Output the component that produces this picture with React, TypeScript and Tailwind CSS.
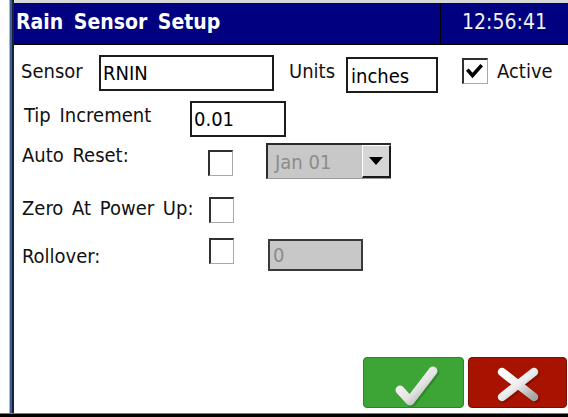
import type { ReactNode } from 'react';

// Sunken 3D checkbox used on the setup form
function CheckBox({ checked = false, className = '' }: { checked?: boolean; className?: string }) {
  return (
    <div
      className={`shrink-0 w-[25px] h-[26px] bg-white border-t-2 border-l-2 border-b border-r border-t-[#303030] border-l-[#303030] border-b-[#a8a8a8] border-r-[#a8a8a8] ${className}`}
    >
      {checked && (
        <svg width="22" height="23" viewBox="0 0 22 23" className="block">
          <path d="M4.5 11 L8.5 15.5 L16.5 6.5" fill="none" stroke="#000" strokeWidth="3.6" strokeLinecap="square" />
        </svg>
      )}
    </div>
  );
}

function TextBox({ children, className = '' }: { children: ReactNode; className?: string }) {
  return (
    <div className={`shrink-0 flex items-center border-2 border-[#1c1c1c] bg-white text-black ${className}`}>
      {children}
    </div>
  );
}

function Label({ children, className = '' }: { children: ReactNode; className?: string }) {
  return <div className={`shrink-0 whitespace-nowrap leading-[24px] [word-spacing:3px] ${className}`}>{children}</div>;
}

// Glossy check / cross glyphs on the OK and Cancel buttons
function OkGlyph() {
  return (
    <svg width="101" height="51" viewBox="0 0 101 51" className="block">
      <defs>
        <linearGradient id="okShine" x1="0" y1="0" x2="1" y2="1">
          <stop offset="0" stopColor="#ffffff" />
          <stop offset="0.55" stopColor="#e4e4e4" />
          <stop offset="1" stopColor="#9c9c9c" />
        </linearGradient>
      </defs>
      <path d="M36 32 L46 43 L69 13" fill="none" stroke="#24751f" strokeWidth="9.5" strokeLinecap="round" strokeLinejoin="round" opacity="0.6" transform="translate(1.5 1.5)" />
      <path d="M36 32 L46 43 L69 13" fill="none" stroke="url(#okShine)" strokeWidth="9" strokeLinecap="round" strokeLinejoin="round" />
    </svg>
  );
}

function CancelGlyph() {
  return (
    <svg width="99" height="51" viewBox="0 0 99 51" className="block">
      <defs>
        <linearGradient id="xShine" x1="0" y1="0" x2="1" y2="1">
          <stop offset="0" stopColor="#ffffff" />
          <stop offset="0.5" stopColor="#ededed" />
          <stop offset="1" stopColor="#a4a4a4" />
        </linearGradient>
      </defs>
      <g fill="none" strokeWidth="9" strokeLinecap="round" transform="translate(1.5 1.5)" stroke="#6e0a00" opacity="0.55">
        <path d="M33 14 L65 39" />
        <path d="M65 14 L33 39" />
      </g>
      <g fill="none" strokeWidth="8.5" strokeLinecap="round" stroke="url(#xShine)">
        <path d="M33 14 L65 39" />
        <path d="M65 14 L33 39" />
      </g>
    </svg>
  );
}

export default function App() {
  return (
    <div className="w-[568px] h-[417px] bg-white flex flex-col overflow-hidden text-[20px] text-[#111] font-['DejaVu_Sans_Condensed','DejaVu_Sans',sans-serif]">
      <div className="flex flex-1 min-h-0 pl-[9px]">
        {/* window frame, left edge */}
        <div className="w-px bg-[#a9b9ce]" />
        <div className="w-[2px] bg-[#3b5e8e]" />
        <div className="w-[2px] bg-[#18203a]" />

        <div className="flex-1 flex flex-col min-w-0">
          <div className="h-[3px] bg-[#d8d8d8]" />

          {/* caption bar */}
          <header className="h-[42px] shrink-0 flex bg-[#000080] border-b border-black text-white">
            <div className="flex-1 flex items-center pl-[2px] pb-[1px] font-bold text-[21px] [word-spacing:4px]">
              Rain Sensor Setup
            </div>
            <div className="w-[128px] flex items-center justify-center border-l border-black text-[#f2f2f2] text-[21px] pb-[1px]">
              12:56:41
            </div>
          </header>

          <main className="flex-1 flex flex-col pl-[7px]">
            {/* sensor name, units, active */}
            <div className="flex items-start mt-[10px]">
              <Label className="w-[78px] mt-[4px]">Sensor</Label>
              <TextBox className="w-[175px] h-[36px] pl-[2px]">RNIN</TextBox>
              <Label className="ml-[15px] w-[57px] mt-[4px]">Units</Label>
              <TextBox className="w-[92px] h-[36px] mt-[2px] pl-[3px] pt-[2px]">inches</TextBox>
              <CheckBox checked className="ml-[24px] mt-[3px] w-[26px]" />
              <Label className="ml-[9px] mt-[4px]">Active</Label>
            </div>

            {/* tip increment */}
            <div className="flex items-start mt-[8px]">
              <Label className="ml-[3px] w-[166px] mt-[2px]">Tip Increment</Label>
              <TextBox className="w-[96px] h-[36px] pl-[2px]">0.01</TextBox>
            </div>

            {/* auto reset with date picker */}
            <div className="flex items-start mt-[6px]">
              <Label className="ml-[1px] w-[186px]">Auto Reset:</Label>
              <CheckBox className="mt-[7px]" />
              <div className="ml-[33px] w-[125px] h-[36px] flex bg-[#c8c8c8] border-t-2 border-l-2 border-b border-t-[#2a2a2a] border-l-[#2a2a2a] border-b-[#9a9a9a]">
                <div className="flex-1 flex items-center pl-[7px] text-[#8c8c8c]">Jan 01</div>
                <div className="w-[29px] flex items-center justify-center bg-[#d6d6d6] border-t border-l border-r-2 border-b-2 border-t-white border-l-white border-r-[#1a1a1a] border-b-[#1a1a1a]">
                  <svg width="14" height="8" viewBox="0 0 14 8" className="block">
                    <path d="M0 0 H14 L7 8 Z" fill="#000" />
                  </svg>
                </div>
              </div>
            </div>

            {/* zero at power up */}
            <div className="flex items-start mt-[17px]">
              <Label className="ml-[1px] w-[187px]">Zero At Power Up:</Label>
              <CheckBox className="mt-[1px] w-[24px]" />
            </div>

            {/* rollover */}
            <div className="flex items-start mt-[15px]">
              <Label className="ml-[1px] w-[187px] mt-[6px]">Rollover:</Label>
              <CheckBox className="w-[24px]" />
              <div className="ml-[34px] mt-[1px] w-[95px] h-[32px] flex items-center pl-[3px] bg-[#c8c8c8] border-2 border-[#3a3a3a] text-[#8c8c8c]">
                0
              </div>
            </div>

            {/* ok / cancel */}
            <div className="mt-auto mb-[5px] flex justify-end gap-[4px] pr-px">
              <button className="w-[101px] h-[51px] rounded-[4px] bg-[#3da535] border border-[#2b8428] p-0 overflow-hidden">
                <OkGlyph />
              </button>
              <button className="w-[99px] h-[51px] rounded-[4px] bg-[#a81300] border border-[#7c0e00] p-0 overflow-hidden">
                <CancelGlyph />
              </button>
            </div>
          </main>
        </div>
      </div>

      {/* window frame, bottom edge */}
      <div className="h-px bg-[#7c7c7c]" />
      <div className="h-[3px] bg-black" />
    </div>
  );
}
